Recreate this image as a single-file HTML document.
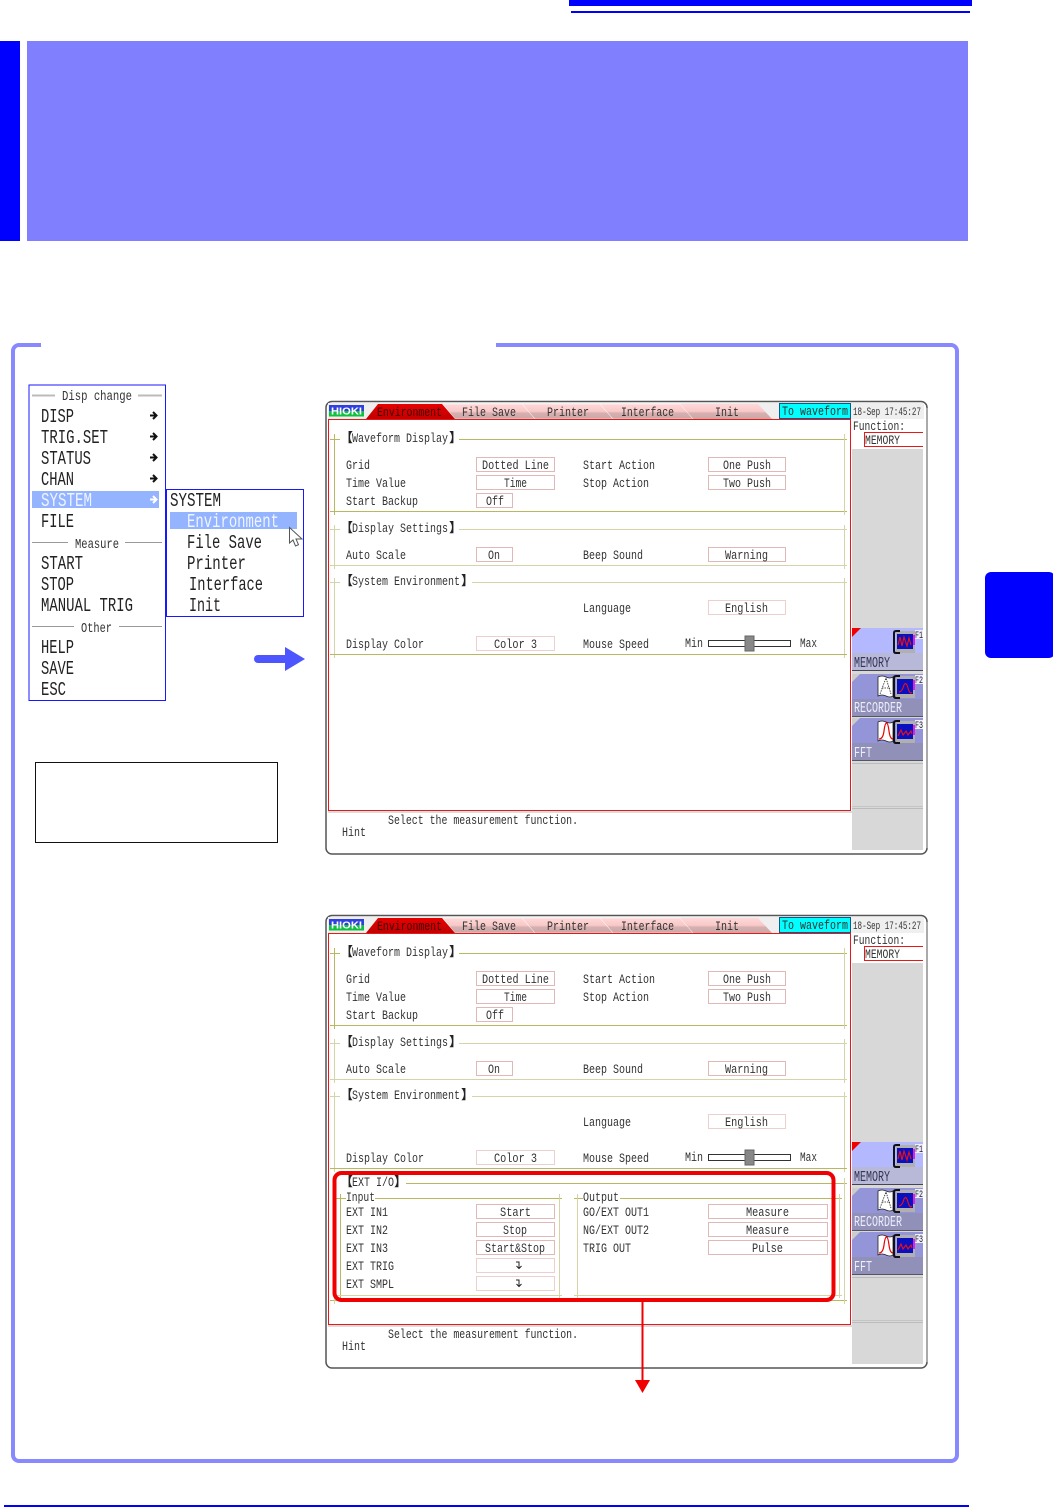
<!DOCTYPE html>
<html>
<head>
<meta charset="utf-8">
<style>
html,body{margin:0;padding:0;background:#fff}
svg{display:block}
text{font-family:"Liberation Mono",monospace;white-space:pre}
.t{font-size:13px;fill:#333}
.m{font-size:19px;fill:#222}
.h{font-size:14px;fill:#333}
.n{font-size:15px}
.b{font-family:"Noto Sans CJK JP",sans-serif;font-size:13px;font-weight:bold;fill:#222}
.f{font-size:10px;fill:#222}
.w{fill:#fff;stroke:#e0b8b8;stroke-width:1}
.l{fill:#fff;stroke:#ecd0d0;stroke-width:1}
.s{stroke:#b8b860;stroke-width:1;fill:none}
.p{stroke:#d4d4a8;stroke-width:1;fill:none}
</style>
</head>
<body>
<svg xmlns="http://www.w3.org/2000/svg" width="1053" height="1507" viewBox="0 0 1053 1507">
<defs>
<linearGradient id="pk" x1="0" y1="0" x2="0" y2="1"><stop offset="0" stop-color="#ffd8d8"/><stop offset=".5" stop-color="#f8c8c8"/><stop offset=".6" stop-color="#d8b0b0"/><stop offset="1" stop-color="#c8a8a8"/></linearGradient>
<linearGradient id="rd" x1="0" y1="0" x2="0" y2="1"><stop offset="0" stop-color="#e80000"/><stop offset="1" stop-color="#c00000"/></linearGradient>
</defs>
<rect width="1053" height="1507" fill="#fff"/>
<rect x="569" y="0" width="403" height="6" fill="#0000ff"/>
<rect x="571" y="11" width="399" height="2" fill="#0000ff"/>
<rect x="0" y="41" width="20" height="200" fill="#0000ff"/>
<rect x="27" y="41" width="941" height="200" fill="#8080ff"/>
<rect x="985" y="572" width="70" height="86" rx="6" fill="#0000ff"/>
<rect x="4" y="1505" width="965" height="2" fill="#0000ff"/>
<path d="M41 345H19a6 6 0 0 0-6 6V1455a6 6 0 0 0 6 6H951a6 6 0 0 0 6-6V351a6 6 0 0 0-6-6H496" fill="none" stroke="#8888ff" stroke-width="4"/>

<!-- Menu -->
<rect x="29" y="385" width="136.500" height="315.500" fill="#fff" stroke="#1818ff"/>
<path d="M32 395.500H55M138 395.500H162" stroke="#bbb" stroke-width="2"/>
<path d="M32 542.500H68M125 542.500H162M32 626.500H74M119 626.500H162" stroke="#999" stroke-width="1"/>
<text class="h" x="62" y="400" textLength="70" lengthAdjust="spacingAndGlyphs">Disp change</text>
<text class="h" x="75" y="548" textLength="44" lengthAdjust="spacingAndGlyphs">Measure</text>
<text class="h" x="81" y="632" textLength="31" lengthAdjust="spacingAndGlyphs">Other</text>
<rect x="32" y="491" width="127" height="17" fill="#94b4ff"/>
<text class="m" x="41" y="422" textLength="33" lengthAdjust="spacingAndGlyphs">DISP</text>
<text class="m" x="41" y="443" textLength="67" lengthAdjust="spacingAndGlyphs">TRIG.SET</text>
<text class="m" x="41" y="464" textLength="50" lengthAdjust="spacingAndGlyphs">STATUS</text>
<text class="m" x="41" y="485" textLength="33" lengthAdjust="spacingAndGlyphs">CHAN</text>
<text class="m" x="41" y="506" textLength="51" lengthAdjust="spacingAndGlyphs" style="fill:#f0f4ff">SYSTEM</text>
<text class="m" x="41" y="527" textLength="33" lengthAdjust="spacingAndGlyphs">FILE</text>
<text class="m" x="41" y="569" textLength="42" lengthAdjust="spacingAndGlyphs">START</text>
<text class="m" x="41" y="590" textLength="33" lengthAdjust="spacingAndGlyphs">STOP</text>
<text class="m" x="41" y="611" textLength="92" lengthAdjust="spacingAndGlyphs">MANUAL TRIG</text>
<text class="m" x="41" y="653" textLength="33" lengthAdjust="spacingAndGlyphs">HELP</text>
<text class="m" x="41" y="674" textLength="33" lengthAdjust="spacingAndGlyphs">SAVE</text>
<text class="m" x="41" y="695" textLength="25" lengthAdjust="spacingAndGlyphs">ESC</text>
<g fill="none" stroke="#111" stroke-width="2">
<path d="M150 415.500h6M153 412l3.500 3.500-3.500 3.500"/>
<path d="M150 436.500h6M153 433l3.500 3.500-3.500 3.500"/>
<path d="M150 457.500h6M153 454l3.500 3.500-3.500 3.500"/>
<path d="M150 478.500h6M153 475l3.500 3.500-3.500 3.500"/>
<path d="M150 499.500h6M153 496l3.500 3.500-3.500 3.500" stroke="#fff"/>
</g>
<rect x="166.500" y="489.500" width="137" height="127" fill="#fff" stroke="#1818ff"/>
<rect x="170" y="512" width="127" height="17" fill="#94b4ff"/>
<text class="m" x="170" y="506" textLength="51" lengthAdjust="spacingAndGlyphs">SYSTEM</text>
<text class="m" x="187" y="527" textLength="92" lengthAdjust="spacingAndGlyphs" style="fill:#f0f4ff">Environment</text>
<text class="m" x="187" y="548" textLength="75" lengthAdjust="spacingAndGlyphs">File Save</text>
<text class="m" x="187" y="569" textLength="59" lengthAdjust="spacingAndGlyphs">Printer</text>
<text class="m" x="189" y="590" textLength="74" lengthAdjust="spacingAndGlyphs">Interface</text>
<text class="m" x="189" y="611" textLength="32" lengthAdjust="spacingAndGlyphs">Init</text>
<path d="M289.500 527.500V543l3.500-3 2.500 6 3-1.300-2.500-5.700H302Z" fill="#fff" stroke="#555"/>
<path d="M258 659H285" stroke="#4d55ff" stroke-width="8" stroke-linecap="round"/>
<path d="M285 647L305 659L285 671Z" fill="#4d55ff"/>
<rect x="35.500" y="762.500" width="242" height="80" fill="#fff" stroke="#111"/>

<!-- Screen 1 -->
<g>
<rect x="326" y="401.500" width="601" height="452.500" rx="6" fill="#fff" stroke="#555" stroke-width="1.500"/>
<path d="M927 408V848" stroke="#aaa" stroke-width="2"/>
<rect x="328" y="403" width="596" height="16" fill="#efefef"/>
<rect x="329" y="405" width="35" height="6" fill="#3040e0"/><rect x="329" y="411" width="35" height="5.500" fill="#10c040"/>
<text x="331" y="414.500" font-size="10" font-weight="bold" fill="#fff" textLength="31" lengthAdjust="spacingAndGlyphs" style="font-family:'Liberation Sans',sans-serif">HIOKI</text>
<path d="M680 404H758L772 419H693Z" fill="url(#pk)"/>
<path d="M600 404H680L693 419H613Z" fill="url(#pk)" stroke="#fff" stroke-width=".5"/>
<path d="M522 404H600L613 419H535Z" fill="url(#pk)" stroke="#fff" stroke-width=".5"/>
<path d="M443 404H522L535 419H455Z" fill="url(#pk)" stroke="#fff" stroke-width=".5"/>
<path d="M378 404H442L455 419H366Z" fill="url(#rd)"/>
<text class="t" x="377" y="416" textLength="65" lengthAdjust="spacingAndGlyphs" style="fill:#400">Environment</text>
<text class="t" x="462" y="416" textLength="54" lengthAdjust="spacingAndGlyphs">File Save</text>
<text class="t" x="547" y="416" textLength="42" lengthAdjust="spacingAndGlyphs">Printer</text>
<text class="t" x="621" y="416" textLength="53" lengthAdjust="spacingAndGlyphs">Interface</text>
<text class="t" x="715" y="416" textLength="24" lengthAdjust="spacingAndGlyphs">Init</text>
<rect x="779.500" y="403.500" width="71" height="15" fill="#00ffff" stroke="#0a5a8a"/>
<text class="t" x="782" y="415" textLength="66" lengthAdjust="spacingAndGlyphs">To waveform</text>
<text x="853" y="415" font-size="11" fill="#333" textLength="68" lengthAdjust="spacingAndGlyphs">18-Sep 17:45:27</text>
<rect x="328.500" y="419.500" width="522" height="391" fill="#fff" stroke="#e81818"/>
<rect x="328" y="811" width="524" height="2" fill="#ddd"/>
<rect x="852" y="449" width="71" height="401" fill="#d8d8d8"/>
<text class="t" x="853" y="430" textLength="52" lengthAdjust="spacingAndGlyphs">Function:</text>
<path d="M923 432.500H864.500V446.500H923" fill="#fff" stroke="#e81818"/>
<text class="t" x="865" y="444" textLength="35" lengthAdjust="spacingAndGlyphs">MEMORY</text>
<path class="s" d="M330 439.500H340M459 439.500H847M330 511.500H847M334.500 434V515"/>
<path class="p" d="M844.500 434V515M330 529.500H340M459 529.500H847M330 565.500H847M334.500 525V569M844.500 525V569M330 582.500H340M472 582.500H847M334.500 578V658M844.500 578V658"/>
<path class="s" d="M330 654.500H847"/>
<text class="b" x="340" y="442">【</text><text class="t" x="352" y="442" textLength="96" lengthAdjust="spacingAndGlyphs">Waveform Display</text><text class="b" x="449" y="442">】</text>
<text class="b" x="340" y="532">【</text><text class="t" x="352" y="532" textLength="96" lengthAdjust="spacingAndGlyphs">Display Settings</text><text class="b" x="449" y="532">】</text>
<text class="b" x="340" y="585">【</text><text class="t" x="352" y="585" textLength="108" lengthAdjust="spacingAndGlyphs">System Environment</text><text class="b" x="461" y="585">】</text>
<text class="t" x="346" y="469" textLength="24" lengthAdjust="spacingAndGlyphs">Grid</text>
<text class="t" x="346" y="487" textLength="60" lengthAdjust="spacingAndGlyphs">Time Value</text>
<text class="t" x="346" y="505" textLength="72" lengthAdjust="spacingAndGlyphs">Start Backup</text>
<text class="t" x="346" y="559" textLength="60" lengthAdjust="spacingAndGlyphs">Auto Scale</text>
<text class="t" x="346" y="648" textLength="78" lengthAdjust="spacingAndGlyphs">Display Color</text>
<text class="t" x="583" y="469" textLength="72" lengthAdjust="spacingAndGlyphs">Start Action</text>
<text class="t" x="583" y="487" textLength="66" lengthAdjust="spacingAndGlyphs">Stop Action</text>
<text class="t" x="583" y="559" textLength="60" lengthAdjust="spacingAndGlyphs">Beep Sound</text>
<text class="t" x="583" y="612" textLength="48" lengthAdjust="spacingAndGlyphs">Language</text>
<text class="t" x="583" y="648" textLength="66" lengthAdjust="spacingAndGlyphs">Mouse Speed</text>
<rect class="w" x="476.500" y="457.500" width="78" height="14"/><text class="t" x="482" y="469" textLength="67" lengthAdjust="spacingAndGlyphs">Dotted Line</text>
<rect class="w" x="476.500" y="475.500" width="78" height="14"/><text class="t" x="504" y="487" textLength="23" lengthAdjust="spacingAndGlyphs">Time</text>
<rect class="w" x="476.500" y="493.500" width="36" height="14"/><text class="t" x="486" y="505" textLength="18" lengthAdjust="spacingAndGlyphs">Off</text>
<rect class="w" x="476.500" y="547.500" width="36" height="14"/><text class="t" x="488" y="559" textLength="12" lengthAdjust="spacingAndGlyphs">On</text>
<rect class="l" x="476.500" y="636.500" width="78" height="14"/><text class="t" x="494" y="648" textLength="43" lengthAdjust="spacingAndGlyphs">Color 3</text>
<rect class="w" x="708.500" y="457.500" width="77" height="14"/><text class="t" x="723" y="469" textLength="48" lengthAdjust="spacingAndGlyphs">One Push</text>
<rect class="w" x="708.500" y="475.500" width="77" height="14"/><text class="t" x="723" y="487" textLength="48" lengthAdjust="spacingAndGlyphs">Two Push</text>
<rect class="w" x="708.500" y="547.500" width="77" height="14"/><text class="t" x="725" y="559" textLength="43" lengthAdjust="spacingAndGlyphs">Warning</text>
<rect class="l" x="708.500" y="600.500" width="77" height="14"/><text class="t" x="725" y="612" textLength="43" lengthAdjust="spacingAndGlyphs">English</text>
<text class="t" x="685" y="647" textLength="18" lengthAdjust="spacingAndGlyphs">Min</text>
<text class="t" x="800" y="647" textLength="17" lengthAdjust="spacingAndGlyphs">Max</text>
<rect x="708.500" y="640.500" width="82" height="6" fill="#fff" stroke="#333"/>
<rect x="745" y="636" width="9" height="15" fill="#888" stroke="#666"/>
<rect x="852" y="628" width="71" height="25" fill="#b4b8ff"/><rect x="852" y="653" width="71" height="17" fill="#b8b8d8"/><rect x="852" y="670" width="71" height="1" fill="#445"/>
<path d="M852 628h9l-9 9Z" fill="#f00000"/>
<rect x="852" y="674" width="71" height="25" fill="#9494d8"/><rect x="852" y="699" width="71" height="17" fill="#9090b8"/><rect x="852" y="716" width="71" height="1" fill="#556"/>
<path d="M852 674h8l-8 8Z" fill="#ccc"/>
<rect x="852" y="718" width="71" height="25" fill="#9494d8"/><rect x="852" y="743" width="71" height="17" fill="#9090b8"/><rect x="852" y="760" width="71" height="1" fill="#556"/>
<path d="M852 718h8l-8 8Z" fill="#ccc"/>
<path d="M852 763.500H923M852 808.500H923" stroke="#bbb"/>
<path d="M852 806.500H923" stroke="#c4c4c4"/>
<text class="n" x="854" y="667" textLength="36" lengthAdjust="spacingAndGlyphs" style="fill:#335">MEMORY</text>
<text class="n" x="854" y="712" textLength="48" lengthAdjust="spacingAndGlyphs" style="fill:#eef">RECORDER</text>
<text class="n" x="854" y="757" textLength="18" lengthAdjust="spacingAndGlyphs" style="fill:#eef">FFT</text>
<path d="M878 677q4-2 8 0t7 0V696q-3 2-7 0t-8 0Z" fill="#fff" stroke="#222" stroke-width=".8"/><path d="M880 694L886 678L891 694M882 688H890" fill="none" stroke="#222" stroke-width=".8" stroke-dasharray="1.500 1"/>
<path d="M878 722q4-2 8 0t7 0V741q-3 2-7 0t-8 0Z" fill="#fff" stroke="#222" stroke-width=".8"/><path d="M879 739Q883 739 884 731T886.500 723T889 731T893 739" fill="none" stroke="#e00" stroke-width="1.200"/>
<g>
<rect x="896" y="631" width="19" height="22" fill="#b0b0b0"/><path d="M900 631H896q-2 0-2 2V651q0 2 2 2H900" fill="none" stroke="#111" stroke-width="2"/><rect x="897" y="634" width="16" height="15" fill="#0a10c0"/><path d="M898 645l2-8 2 9 2-9 3 9 2-8 2 7" fill="none" stroke="#f01010" stroke-width="1.100"/><rect x="913" y="635" width="2" height="10" fill="#e020e0"/>
<rect x="896" y="676" width="19" height="22" fill="#b0b0b0"/><path d="M900 676H896q-2 0-2 2V696q0 2 2 2H900" fill="none" stroke="#111" stroke-width="2"/><rect x="897" y="679" width="16" height="15" fill="#0a10c0"/><path d="M899 692Q902 692 904 685Q906 681 908 688T912 692" fill="none" stroke="#f01010" stroke-width="1.100"/><rect x="913" y="680" width="2" height="10" fill="#e020e0"/>
<rect x="896" y="721" width="19" height="22" fill="#b0b0b0"/><path d="M900 721H896q-2 0-2 2V741q0 2 2 2H900" fill="none" stroke="#111" stroke-width="2"/><rect x="897" y="724" width="16" height="15" fill="#0a10c0"/><path d="M898 736l3-6 2 5 3-4 2 4 3-4 1 3" fill="none" stroke="#f01010" stroke-width="1.100"/><rect x="913" y="725" width="2" height="10" fill="#e020e0"/>
</g>
<rect x="915" y="630" width="8" height="9" fill="#eef"/><text class="f" x="915" y="638" textLength="8" lengthAdjust="spacingAndGlyphs">F1</text>
<rect x="915" y="675" width="8" height="9" fill="#eef"/><text class="f" x="915" y="683" textLength="8" lengthAdjust="spacingAndGlyphs">F2</text>
<rect x="915" y="720" width="8" height="9" fill="#eef"/><text class="f" x="915" y="728" textLength="8" lengthAdjust="spacingAndGlyphs">F3</text>
<text class="t" x="388" y="824" textLength="190" lengthAdjust="spacingAndGlyphs">Select the measurement function.</text>
<text class="t" x="342" y="836" textLength="24" lengthAdjust="spacingAndGlyphs">Hint</text>
</g>

<!-- Screen 2 -->
<g transform="translate(0,514)">
<rect x="326" y="401.500" width="601" height="452.500" rx="6" fill="#fff" stroke="#555" stroke-width="1.500"/>
<path d="M927 408V848" stroke="#aaa" stroke-width="2"/>
<rect x="328" y="403" width="596" height="16" fill="#efefef"/>
<rect x="329" y="405" width="35" height="6" fill="#3040e0"/><rect x="329" y="411" width="35" height="5.500" fill="#10c040"/>
<text x="331" y="414.500" font-size="10" font-weight="bold" fill="#fff" textLength="31" lengthAdjust="spacingAndGlyphs" style="font-family:'Liberation Sans',sans-serif">HIOKI</text>
<path d="M680 404H758L772 419H693Z" fill="url(#pk)"/>
<path d="M600 404H680L693 419H613Z" fill="url(#pk)" stroke="#fff" stroke-width=".5"/>
<path d="M522 404H600L613 419H535Z" fill="url(#pk)" stroke="#fff" stroke-width=".5"/>
<path d="M443 404H522L535 419H455Z" fill="url(#pk)" stroke="#fff" stroke-width=".5"/>
<path d="M378 404H442L455 419H366Z" fill="url(#rd)"/>
<text class="t" x="377" y="416" textLength="65" lengthAdjust="spacingAndGlyphs" style="fill:#400">Environment</text>
<text class="t" x="462" y="416" textLength="54" lengthAdjust="spacingAndGlyphs">File Save</text>
<text class="t" x="547" y="416" textLength="42" lengthAdjust="spacingAndGlyphs">Printer</text>
<text class="t" x="621" y="416" textLength="53" lengthAdjust="spacingAndGlyphs">Interface</text>
<text class="t" x="715" y="416" textLength="24" lengthAdjust="spacingAndGlyphs">Init</text>
<rect x="779.500" y="403.500" width="71" height="15" fill="#00ffff" stroke="#0a5a8a"/>
<text class="t" x="782" y="415" textLength="66" lengthAdjust="spacingAndGlyphs">To waveform</text>
<text x="853" y="415" font-size="11" fill="#333" textLength="68" lengthAdjust="spacingAndGlyphs">18-Sep 17:45:27</text>
<rect x="328.500" y="419.500" width="522" height="391" fill="#fff" stroke="#e81818"/>
<rect x="328" y="811" width="524" height="2" fill="#ddd"/>
<rect x="852" y="449" width="71" height="401" fill="#d8d8d8"/>
<text class="t" x="853" y="430" textLength="52" lengthAdjust="spacingAndGlyphs">Function:</text>
<path d="M923 432.500H864.500V446.500H923" fill="#fff" stroke="#e81818"/>
<text class="t" x="865" y="444" textLength="35" lengthAdjust="spacingAndGlyphs">MEMORY</text>
<path class="s" d="M330 439.500H340M459 439.500H847M330 511.500H847M334.500 434V515"/>
<path class="p" d="M844.500 434V515M330 529.500H340M459 529.500H847M330 565.500H847M334.500 525V569M844.500 525V569M330 582.500H340M472 582.500H847M334.500 578V658M844.500 578V658"/>
<path class="s" d="M330 654.500H847"/>
<text class="b" x="340" y="442">【</text><text class="t" x="352" y="442" textLength="96" lengthAdjust="spacingAndGlyphs">Waveform Display</text><text class="b" x="449" y="442">】</text>
<text class="b" x="340" y="532">【</text><text class="t" x="352" y="532" textLength="96" lengthAdjust="spacingAndGlyphs">Display Settings</text><text class="b" x="449" y="532">】</text>
<text class="b" x="340" y="585">【</text><text class="t" x="352" y="585" textLength="108" lengthAdjust="spacingAndGlyphs">System Environment</text><text class="b" x="461" y="585">】</text>
<text class="t" x="346" y="469" textLength="24" lengthAdjust="spacingAndGlyphs">Grid</text>
<text class="t" x="346" y="487" textLength="60" lengthAdjust="spacingAndGlyphs">Time Value</text>
<text class="t" x="346" y="505" textLength="72" lengthAdjust="spacingAndGlyphs">Start Backup</text>
<text class="t" x="346" y="559" textLength="60" lengthAdjust="spacingAndGlyphs">Auto Scale</text>
<text class="t" x="346" y="648" textLength="78" lengthAdjust="spacingAndGlyphs">Display Color</text>
<text class="t" x="583" y="469" textLength="72" lengthAdjust="spacingAndGlyphs">Start Action</text>
<text class="t" x="583" y="487" textLength="66" lengthAdjust="spacingAndGlyphs">Stop Action</text>
<text class="t" x="583" y="559" textLength="60" lengthAdjust="spacingAndGlyphs">Beep Sound</text>
<text class="t" x="583" y="612" textLength="48" lengthAdjust="spacingAndGlyphs">Language</text>
<text class="t" x="583" y="648" textLength="66" lengthAdjust="spacingAndGlyphs">Mouse Speed</text>
<rect class="w" x="476.500" y="457.500" width="78" height="14"/><text class="t" x="482" y="469" textLength="67" lengthAdjust="spacingAndGlyphs">Dotted Line</text>
<rect class="w" x="476.500" y="475.500" width="78" height="14"/><text class="t" x="504" y="487" textLength="23" lengthAdjust="spacingAndGlyphs">Time</text>
<rect class="w" x="476.500" y="493.500" width="36" height="14"/><text class="t" x="486" y="505" textLength="18" lengthAdjust="spacingAndGlyphs">Off</text>
<rect class="w" x="476.500" y="547.500" width="36" height="14"/><text class="t" x="488" y="559" textLength="12" lengthAdjust="spacingAndGlyphs">On</text>
<rect class="l" x="476.500" y="636.500" width="78" height="14"/><text class="t" x="494" y="648" textLength="43" lengthAdjust="spacingAndGlyphs">Color 3</text>
<rect class="w" x="708.500" y="457.500" width="77" height="14"/><text class="t" x="723" y="469" textLength="48" lengthAdjust="spacingAndGlyphs">One Push</text>
<rect class="w" x="708.500" y="475.500" width="77" height="14"/><text class="t" x="723" y="487" textLength="48" lengthAdjust="spacingAndGlyphs">Two Push</text>
<rect class="w" x="708.500" y="547.500" width="77" height="14"/><text class="t" x="725" y="559" textLength="43" lengthAdjust="spacingAndGlyphs">Warning</text>
<rect class="l" x="708.500" y="600.500" width="77" height="14"/><text class="t" x="725" y="612" textLength="43" lengthAdjust="spacingAndGlyphs">English</text>
<text class="t" x="685" y="647" textLength="18" lengthAdjust="spacingAndGlyphs">Min</text>
<text class="t" x="800" y="647" textLength="17" lengthAdjust="spacingAndGlyphs">Max</text>
<rect x="708.500" y="640.500" width="82" height="6" fill="#fff" stroke="#333"/>
<rect x="745" y="636" width="9" height="15" fill="#888" stroke="#666"/>
<rect x="852" y="628" width="71" height="25" fill="#b4b8ff"/><rect x="852" y="653" width="71" height="17" fill="#b8b8d8"/><rect x="852" y="670" width="71" height="1" fill="#445"/>
<path d="M852 628h9l-9 9Z" fill="#f00000"/>
<rect x="852" y="674" width="71" height="25" fill="#9494d8"/><rect x="852" y="699" width="71" height="17" fill="#9090b8"/><rect x="852" y="716" width="71" height="1" fill="#556"/>
<path d="M852 674h8l-8 8Z" fill="#ccc"/>
<rect x="852" y="718" width="71" height="25" fill="#9494d8"/><rect x="852" y="743" width="71" height="17" fill="#9090b8"/><rect x="852" y="760" width="71" height="1" fill="#556"/>
<path d="M852 718h8l-8 8Z" fill="#ccc"/>
<path d="M852 763.500H923M852 808.500H923" stroke="#bbb"/>
<path d="M852 806.500H923" stroke="#c4c4c4"/>
<text class="n" x="854" y="667" textLength="36" lengthAdjust="spacingAndGlyphs" style="fill:#335">MEMORY</text>
<text class="n" x="854" y="712" textLength="48" lengthAdjust="spacingAndGlyphs" style="fill:#eef">RECORDER</text>
<text class="n" x="854" y="757" textLength="18" lengthAdjust="spacingAndGlyphs" style="fill:#eef">FFT</text>
<path d="M878 677q4-2 8 0t7 0V696q-3 2-7 0t-8 0Z" fill="#fff" stroke="#222" stroke-width=".8"/><path d="M880 694L886 678L891 694M882 688H890" fill="none" stroke="#222" stroke-width=".8" stroke-dasharray="1.500 1"/>
<path d="M878 722q4-2 8 0t7 0V741q-3 2-7 0t-8 0Z" fill="#fff" stroke="#222" stroke-width=".8"/><path d="M879 739Q883 739 884 731T886.500 723T889 731T893 739" fill="none" stroke="#e00" stroke-width="1.200"/>
<g>
<rect x="896" y="631" width="19" height="22" fill="#b0b0b0"/><path d="M900 631H896q-2 0-2 2V651q0 2 2 2H900" fill="none" stroke="#111" stroke-width="2"/><rect x="897" y="634" width="16" height="15" fill="#0a10c0"/><path d="M898 645l2-8 2 9 2-9 3 9 2-8 2 7" fill="none" stroke="#f01010" stroke-width="1.100"/><rect x="913" y="635" width="2" height="10" fill="#e020e0"/>
<rect x="896" y="676" width="19" height="22" fill="#b0b0b0"/><path d="M900 676H896q-2 0-2 2V696q0 2 2 2H900" fill="none" stroke="#111" stroke-width="2"/><rect x="897" y="679" width="16" height="15" fill="#0a10c0"/><path d="M899 692Q902 692 904 685Q906 681 908 688T912 692" fill="none" stroke="#f01010" stroke-width="1.100"/><rect x="913" y="680" width="2" height="10" fill="#e020e0"/>
<rect x="896" y="721" width="19" height="22" fill="#b0b0b0"/><path d="M900 721H896q-2 0-2 2V741q0 2 2 2H900" fill="none" stroke="#111" stroke-width="2"/><rect x="897" y="724" width="16" height="15" fill="#0a10c0"/><path d="M898 736l3-6 2 5 3-4 2 4 3-4 1 3" fill="none" stroke="#f01010" stroke-width="1.100"/><rect x="913" y="725" width="2" height="10" fill="#e020e0"/>
</g>
<rect x="915" y="630" width="8" height="9" fill="#eef"/><text class="f" x="915" y="638" textLength="8" lengthAdjust="spacingAndGlyphs">F1</text>
<rect x="915" y="675" width="8" height="9" fill="#eef"/><text class="f" x="915" y="683" textLength="8" lengthAdjust="spacingAndGlyphs">F2</text>
<rect x="915" y="720" width="8" height="9" fill="#eef"/><text class="f" x="915" y="728" textLength="8" lengthAdjust="spacingAndGlyphs">F3</text>
<text class="t" x="388" y="824" textLength="190" lengthAdjust="spacingAndGlyphs">Select the measurement function.</text>
<text class="t" x="342" y="836" textLength="24" lengthAdjust="spacingAndGlyphs">Hint</text>
</g>

<!-- EXT I/O section -->
<path class="s" d="M406 1183.500H847M335 1198.500H346M375 1198.500H562M340.500 1194V1298M574 1198.500H583M620 1198.500H842M330 1300.500H847"/>
<path class="p" d="M559.500 1194V1298M577.500 1194V1298M839.500 1194V1298M334.500 1178V1304M844.500 1178V1304M335 1295.500H562M574 1295.500H842"/>
<text class="b" x="340" y="1186">【</text><text class="t" x="352" y="1186" textLength="42" lengthAdjust="spacingAndGlyphs">EXT I/O</text><text class="b" x="394" y="1186">】</text>
<text class="t" x="346" y="1201" textLength="29" lengthAdjust="spacingAndGlyphs">Input</text>
<text class="t" x="583" y="1201" textLength="36" lengthAdjust="spacingAndGlyphs">Output</text>
<text class="t" x="346" y="1216" textLength="42" lengthAdjust="spacingAndGlyphs">EXT IN1</text>
<text class="t" x="346" y="1234" textLength="42" lengthAdjust="spacingAndGlyphs">EXT IN2</text>
<text class="t" x="346" y="1252" textLength="42" lengthAdjust="spacingAndGlyphs">EXT IN3</text>
<text class="t" x="346" y="1270" textLength="48" lengthAdjust="spacingAndGlyphs">EXT TRIG</text>
<text class="t" x="346" y="1288" textLength="48" lengthAdjust="spacingAndGlyphs">EXT SMPL</text>
<text class="t" x="583" y="1216" textLength="66" lengthAdjust="spacingAndGlyphs">GO/EXT OUT1</text>
<text class="t" x="583" y="1234" textLength="66" lengthAdjust="spacingAndGlyphs">NG/EXT OUT2</text>
<text class="t" x="583" y="1252" textLength="48" lengthAdjust="spacingAndGlyphs">TRIG OUT</text>
<rect class="w" x="476.500" y="1204.500" width="78" height="14"/><text class="t" x="500" y="1216" textLength="31" lengthAdjust="spacingAndGlyphs">Start</text>
<rect class="w" x="476.500" y="1222.500" width="78" height="14"/><text class="t" x="503" y="1234" textLength="24" lengthAdjust="spacingAndGlyphs">Stop</text>
<rect class="w" x="476.500" y="1240.500" width="78" height="14"/><text class="t" x="485" y="1252" textLength="60" lengthAdjust="spacingAndGlyphs">Start&amp;Stop</text>
<rect class="l" x="476.500" y="1258.500" width="78" height="14"/>
<rect class="l" x="476.500" y="1276.500" width="78" height="14"/>
<path d="M516 1262h3v6M516.500 1266l2.500 2.500 2.500-2.500" fill="none" stroke="#222"/>
<path d="M516 1280h3v6M516.500 1284l2.500 2.500 2.500-2.500" fill="none" stroke="#222"/>
<rect class="w" x="708.500" y="1204.500" width="119" height="14"/><text class="t" x="746" y="1216" textLength="43" lengthAdjust="spacingAndGlyphs">Measure</text>
<rect class="w" x="708.500" y="1222.500" width="119" height="14"/><text class="t" x="746" y="1234" textLength="43" lengthAdjust="spacingAndGlyphs">Measure</text>
<rect class="w" x="708.500" y="1240.500" width="119" height="14"/><text class="t" x="752" y="1252" textLength="31" lengthAdjust="spacingAndGlyphs">Pulse</text>
<rect x="334.500" y="1173" width="499" height="127" rx="7" fill="none" stroke="#f00000" stroke-width="4"/>
<path d="M642.500 1302V1382" stroke="#f00000" stroke-width="2"/>
<path d="M635 1380H650L642.500 1393Z" fill="#f00000"/>
</svg>
</body>
</html>
